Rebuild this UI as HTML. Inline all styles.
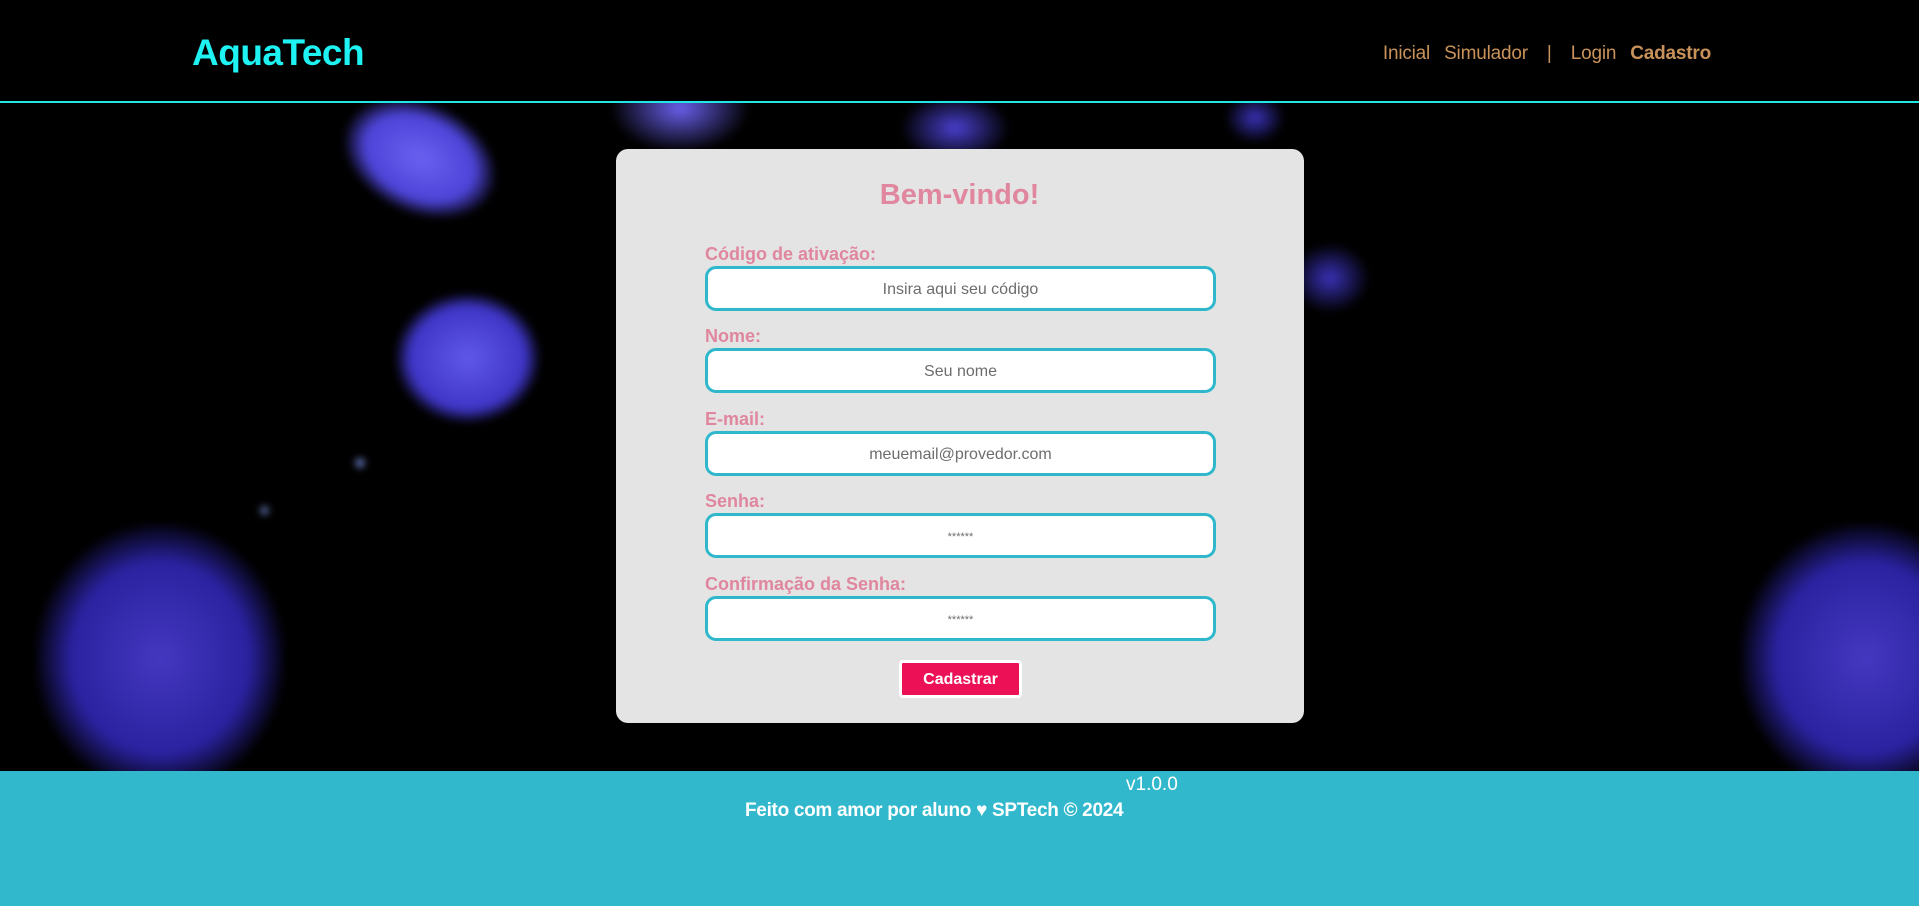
<!DOCTYPE html>
<html><head><meta charset="utf-8"><style>
*{box-sizing:border-box;margin:0;padding:0}
body{width:1919px;height:906px;overflow:hidden;background:#000;font-family:"Liberation Sans",sans-serif;position:relative}
header{position:absolute;left:0;top:0;width:1919px;height:103px;background:#000;border-bottom:2px solid #22e5e5;z-index:2}
.logo{position:absolute;left:192px;top:32px;font-size:37px;font-weight:bold;color:#1ff2f2;letter-spacing:-0.5px}
nav{position:absolute;right:208px;top:43px;font-size:19px;color:#c8925a;letter-spacing:-0.2px}
nav span{margin-left:14px}
nav b{margin-left:14px}
.bg{position:absolute;left:0;top:103px;width:1919px;height:668px;overflow:hidden}
.j{position:absolute;border-radius:50%;filter:blur(4px)}
.card{position:absolute;left:616px;top:149px;width:688px;height:574px;background:#e4e4e4;border-radius:12px}
h1{position:absolute;left:0;width:100%;top:179px;text-align:center;font-size:29px;color:#e0869e;font-weight:bold}
.lbl{position:absolute;left:705px;font-size:18px;font-weight:bold;color:#e0869e}
.in{position:absolute;left:705px;width:511px;height:45px;border:3px solid #2fb8cc;border-radius:11px;background:#fff;text-align:center;font-size:16px;color:#6d6d6d;line-height:42px}
.btn{position:absolute;left:899px;top:660px;width:123px;height:38px;background:#ec1157;border:3px solid #fff;border-radius:4px;color:#fff;font-weight:bold;font-size:16px;text-align:center;line-height:33px}
footer{position:absolute;left:0;top:771px;width:1919px;height:135px;background:#31b8cc;color:#fff}
</style></head><body>
<header><div class="logo">AquaTech</div>
<nav>Inicial<span>Simulador</span><span>&nbsp;|&nbsp;</span><span>Login</span><b>Cadastro</b></nav></header>
<div class="bg">
<div class="j" style="left:340px;top:0px;width:160px;height:110px;background:radial-gradient(ellipse,#6a60f0 0%,#4d44d8 50%,rgba(40,30,150,0) 72%);transform:rotate(25deg)"></div>
<div class="j" style="left:395px;top:190px;width:145px;height:130px;background:radial-gradient(ellipse,#6058e8 0%,#3f36c8 55%,rgba(30,20,120,0) 72%)"></div>
<div class="j" style="left:35px;top:420px;width:250px;height:270px;background:radial-gradient(ellipse,#4438c0 0%,#2a22a0 50%,rgba(20,15,90,0) 72%)"></div>
<div class="j" style="left:1740px;top:420px;width:250px;height:270px;background:radial-gradient(ellipse,#4438c0 0%,#2a22a0 50%,rgba(20,15,90,0) 72%)"></div>
<div class="j" style="left:900px;top:-10px;width:110px;height:70px;background:radial-gradient(ellipse,#4a40d0 0%,rgba(30,20,130,0) 70%)"></div>
<div class="j" style="left:610px;top:-40px;width:140px;height:90px;background:radial-gradient(ellipse,#6a60ee 0%,rgba(40,30,150,0) 70%)"></div>
<div class="j" style="left:1290px;top:140px;width:80px;height:70px;background:radial-gradient(ellipse,#3a32b8 0%,rgba(30,20,120,0) 70%)"></div>
<div class="j" style="left:1225px;top:-10px;width:60px;height:50px;background:radial-gradient(ellipse,#3a32b8 0%,rgba(30,20,120,0) 70%)"></div>
<div class="j" style="left:356px;top:356px;width:8px;height:8px;background:#8aa8ff"></div>
<div class="j" style="left:261px;top:404px;width:7px;height:7px;background:#8aa8ff"></div>
</div>
<div class="card"></div>
<h1>Bem-vindo!</h1>
<div class="lbl" style="top:244px">Código de ativação:</div>
<div class="in" style="top:266px">Insira aqui seu código</div>
<div class="lbl" style="top:326px">Nome:</div>
<div class="in" style="top:348px">Seu nome</div>
<div class="lbl" style="top:409px">E-mail:</div>
<div class="in" style="top:431px">meuemail@provedor.com</div>
<div class="lbl" style="top:491px">Senha:</div>
<div class="in" style="top:513px;font-size:11px">******</div>
<div class="lbl" style="top:574px">Confirmação da Senha:</div>
<div class="in" style="top:596px;font-size:11px">******</div>
<div class="btn">Cadastrar</div>
<footer>
<div style="position:absolute;left:1126px;top:3px;font-size:19px">v1.0.0</div>
<div style="position:absolute;left:745px;top:29px;font-size:19px;font-weight:bold;letter-spacing:-0.3px">Feito com amor por aluno ♥ SPTech © 2024</div>
</footer>
</body></html>
